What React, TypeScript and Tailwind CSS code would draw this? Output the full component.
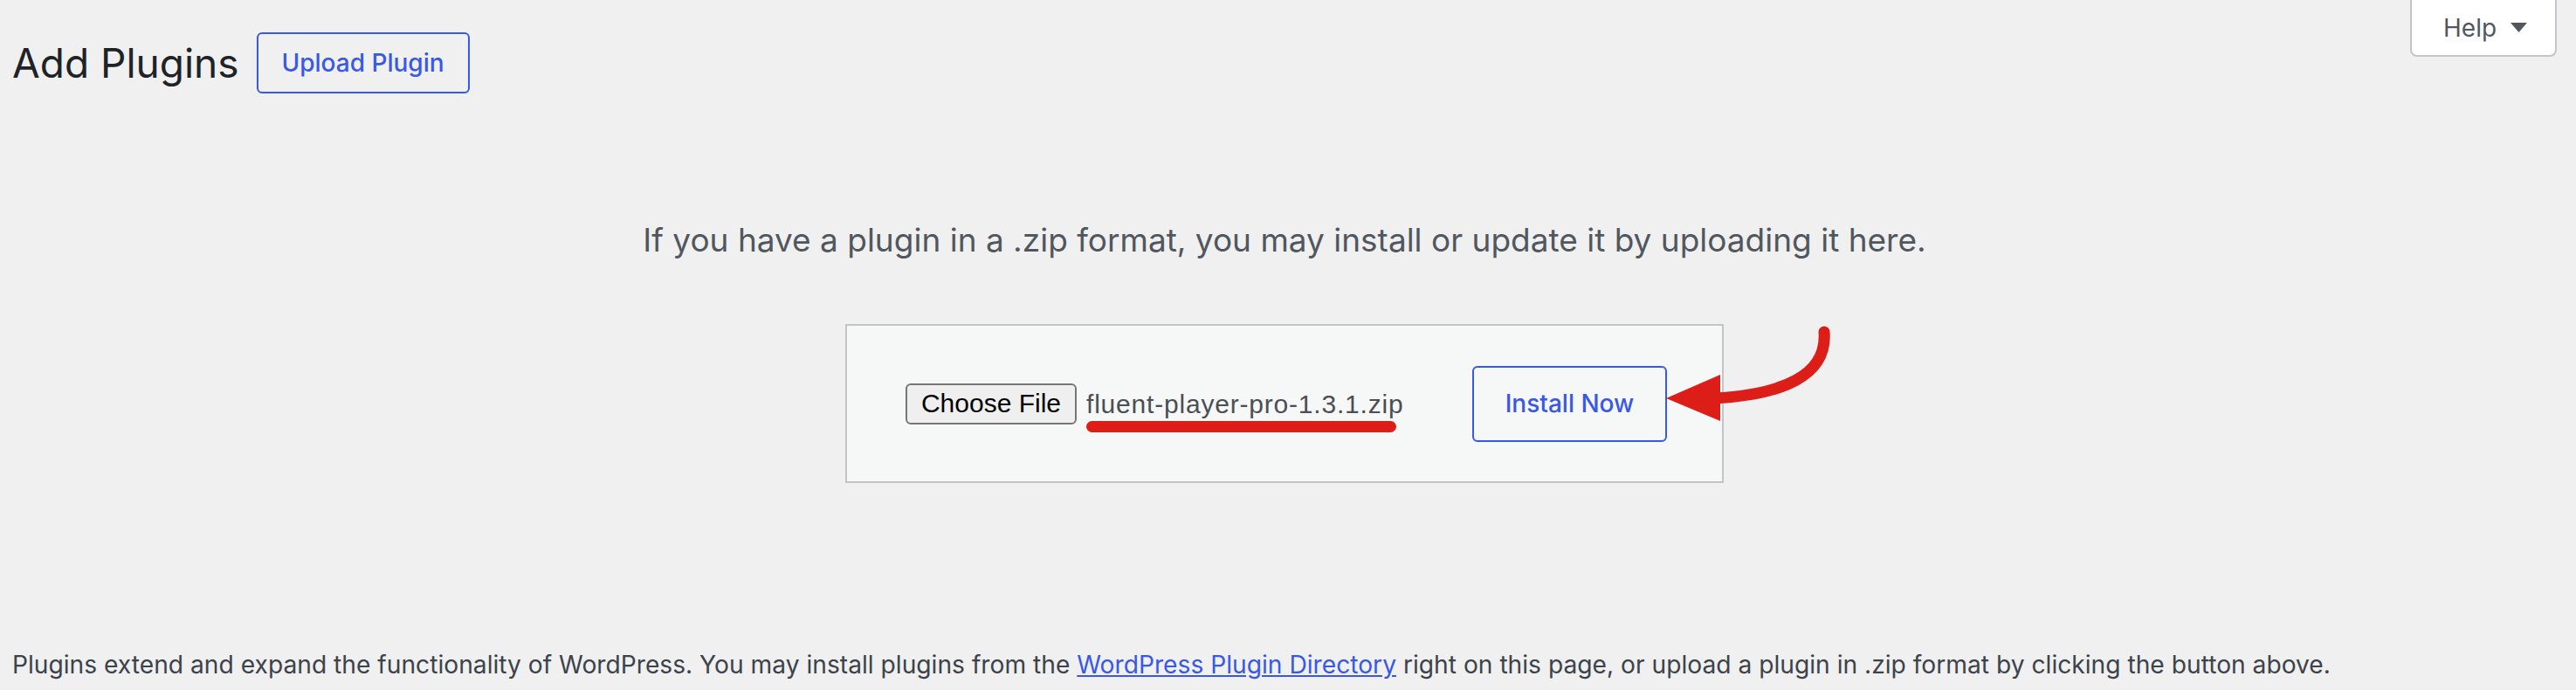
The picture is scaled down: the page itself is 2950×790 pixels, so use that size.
import React from 'react';

const ui = 'font-["Inter","Liberation_Sans",sans-serif]';
const sys = 'font-["Liberation_Sans","Arial",sans-serif]';

function HelpTab() {
  return (
    <button
      type="button"
      className={`${ui} flex h-[65px] w-[168px] items-center gap-[16px] rounded-b-[8px] border-2 border-t-0 border-[#c3c4c7] bg-white pl-[36px] text-[28px] text-[#50575e]`}
    >
      <span>Help</span>
      <svg width="19" height="11" viewBox="0 0 19 11" aria-hidden="true">
        <path d="M0 0 L19 0 L9.5 11 Z" fill="#50575e" />
      </svg>
    </button>
  );
}

function UploadForm() {
  return (
    <div className="relative mx-auto flex h-[182px] w-[1006px] items-center border-2 border-[#c3c4c7] bg-[#f6f7f7] pl-[67px]">
      <button
        type="button"
        className={`${sys} h-[47px] w-[196px] rounded-[6px] border-2 border-[#767676] bg-[#efefef] text-[30px] leading-none text-black`}
      >
        Choose File
      </button>
      <span className={`${sys} relative ml-[11px] w-[442px] text-[30px] tracking-[0.8px] text-[#4a4f55]`}>
        fluent-player-pro-1.3.1.zip
        <span className="absolute left-0 top-[42px] h-[13px] w-[355px] rounded-full bg-[#dd1d17]" />
      </span>
      <button
        type="button"
        className={`${ui} h-[87px] w-[223px] rounded-[6px] border-2 border-[#3858e9] text-[28px] font-medium text-[#3858e9]`}
      >
        Install Now
      </button>

      {/* red callout arrow pointing at the install button */}
      <svg
        className="pointer-events-none absolute left-[898px] top-[-7px]"
        width="240"
        height="125"
        viewBox="0 0 240 125"
        aria-hidden="true"
      >
        <path
          d="M221 14 C225 64 173 86 95 90"
          fill="none"
          stroke="#dd1d17"
          strokeWidth="13"
          strokeLinecap="round"
        />
        <path d="M40 90 L102 63 L102 116 Z" fill="#dd1d17" />
      </svg>
    </div>
  );
}

export default function App() {
  return (
    <div className={`${ui} min-h-[790px] w-full bg-[#f0f0f1] pl-[14px] pr-[22px]`}>
      <div className="flex items-start justify-between">
        <div className="flex items-center gap-[20px] pt-[37px]">
          <h1 className="text-[46px] font-normal leading-none text-[#1d2327]">Add Plugins</h1>
          <button
            type="button"
            className="h-[70px] w-[244px] rounded-[6px] border-2 border-[#3858e9] text-[28px] font-medium text-[#3858e9]"
          >
            Upload Plugin
          </button>
        </div>
        <HelpTab />
      </div>

      <p className="mt-[141px] text-center text-[37px] leading-[54px] text-[#50575e]">
        If you have a plugin in a .zip format, you may install or update it by uploading it here.
      </p>

      <div className="mt-[69px]">
        <UploadForm />
      </div>

      <p className="mt-[188px] text-[28.2px] leading-[40px] text-[#3c434a]">
        Plugins extend and expand the functionality of WordPress. You may install plugins from the{' '}
        <a href="#" className="text-[#3858e9] underline">
          WordPress Plugin Directory
        </a>{' '}
        right on this page, or upload a plugin in .zip format by clicking the button above.
      </p>
    </div>
  );
}
